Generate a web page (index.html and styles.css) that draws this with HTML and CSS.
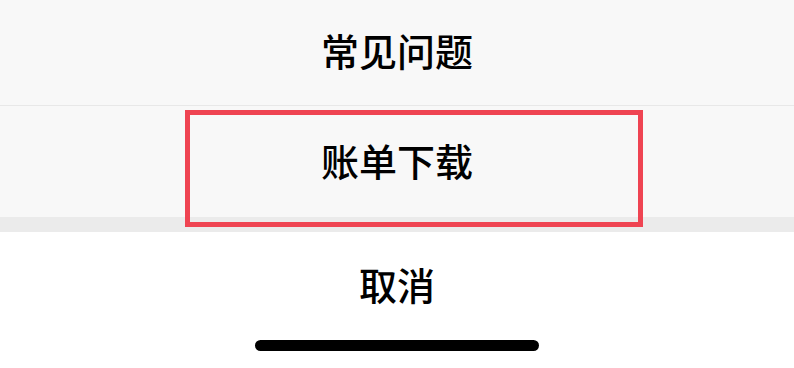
FILE: index.html
```html
<html>
	<head>
		<title>账单操作</title>
		<meta charset="utf-8">
		<link rel="stylesheet" href="styles.css">
	</head>
	<body>
		<div class="sheet">
			<div class="group">
				<div class="item">常见问题</div>
				<div class="item">账单下载</div>
			</div>
			<div class="gap"></div>
			<div class="item cancel">取消</div>
			<div class="homebar"><div class="indicator"></div></div>
			<div class="highlight"></div>
		</div>
	</body>
</html>
```

FILE: styles.css
```css
body{
	margin: 0;
	font-family: "Noto Sans CJK SC", "Noto Sans", sans-serif;
	background-color: #ffffff;
}

div.sheet{
	position: relative;
	width: 794px;
	height: 368px;
	overflow: hidden;
}

div.group{
	background-color: #f8f8f8;
}
div.item{
	display: flex;
	align-items: center;
	justify-content: center;
	box-sizing: border-box;
	height: 105px;
	padding-bottom: 6px;
	font-size: 38px;
	font-weight: 500;
	color: #000000;
}
div.group div.item + div.item{
	border-top: 1px solid #e8e8e8;
	height: 112px;
	padding-bottom: 4px;
}

div.gap{
	height: 15px;
	background-color: #ebebeb;
}

div.cancel{
	background-color: #ffffff;
	height: 104px;
	padding-bottom: 2px;
}

div.homebar{
	display: flex;
	justify-content: center;
	padding-top: 4px;
}
div.indicator{
	width: 284px;
	height: 11px;
	border-radius: 6px;
	background-color: #000000;
}

/* red annotation box drawn over the second item */
div.highlight{
	position: absolute;
	left: 185px;
	top: 110px;
	width: 448px;
	height: 107px;
	border: 5px solid #ef4452;
}
```
